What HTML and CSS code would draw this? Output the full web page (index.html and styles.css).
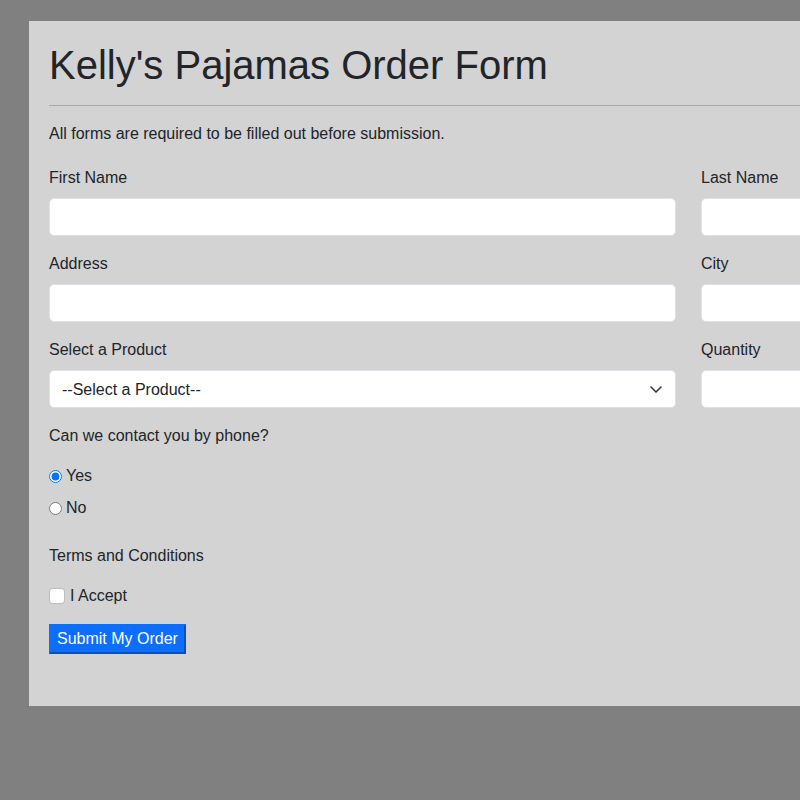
FILE: index.html
```html
<!DOCTYPE html>
<html lang="en">
<head>
<meta charset="utf-8">
<title>Kelly's Pajamas Order Form</title>
<link rel="stylesheet" href="styles.css">
</head>
<body>
<div class="card">
  <h1 class="title">Kelly's Pajamas Order Form</h1>
  <hr class="rule">
  <p class="intro">All forms are required to be filled out before submission.</p>
  <form class="order">
    <div class="grid">
      <div class="field">
        <label class="label" for="first">First Name</label>
        <input class="control" id="first" type="text">
      </div>
      <div class="field">
        <label class="label" for="last">Last Name</label>
        <input class="control" id="last" type="text">
      </div>
      <div class="field">
        <label class="label" for="address">Address</label>
        <input class="control" id="address" type="text">
      </div>
      <div class="field">
        <label class="label" for="city">City</label>
        <input class="control" id="city" type="text">
      </div>
      <div class="field">
        <label class="label" for="product">Select a Product</label>
        <div class="select-wrap">
          <select class="control select" id="product">
            <option>--Select a Product--</option>
          </select>
          <svg class="chevron" width="12" height="7" viewBox="0 0 12 7"><polyline points="1,1 6,6 11,1" fill="none" stroke="#343a40" stroke-width="1.6" stroke-linecap="round" stroke-linejoin="round"/></svg>
        </div>
      </div>
      <div class="field">
        <label class="label" for="qty">Quantity</label>
        <input class="control" id="qty" type="text">
      </div>
    </div>
    <p class="question">Can we contact you by phone?</p>
    <div class="radios">
      <label class="radio-row"><input class="radio" type="radio" name="phone" checked> Yes</label>
      <label class="radio-row"><input class="radio" type="radio" name="phone">No</label>
    </div>
    <p class="question terms">Terms and Conditions</p>
    <label class="check-row"><input class="check" type="checkbox">I Accept</label>
    <button class="submit" type="button">Submit My Order</button>
  </form>
</div>
</body>
</html>
```
FILE: styles.css
```css
html {
  overflow: hidden;
}
body {
  margin: 0;
  background: #808080;
  padding: 21px 0 0 29px;
  font-family: "Liberation Sans", Arial, sans-serif;
  font-size: 16px;
  line-height: 24px;
  color: #212529;
  min-height: 800px;
  box-sizing: border-box;
}
.card {
  width: 1000px;
  background: #d3d3d3;
  padding: 20px 20px 52px 20px;
}
.title {
  margin: 0;
  font-size: 40px;
  line-height: 48px;
  font-weight: 400;
}
.rule {
  margin: 16px 0;
  border: 0;
  border-top: 1px solid #a6a7a8;
  height: 0;
}
.intro {
  margin: 0 0 20px;
}
.order {
  margin: 0;
}
.grid {
  display: grid;
  grid-template-columns: 627px 1fr;
  column-gap: 25px;
  row-gap: 16px;
}
.field {
  display: flex;
  flex-direction: column;
}
.label {
  display: block;
  margin-bottom: 8px;
}
.control {
  box-sizing: border-box;
  height: 38px;
  width: 100%;
  border: 1px solid #dee2e6;
  border-radius: 5px;
  background: #fff;
  padding: 6px 12px;
  font-family: inherit;
  font-size: 16px;
  color: #212529;
  margin: 0;
  outline: none;
}
.select-wrap {
  position: relative;
}
.select {
  appearance: none;
  -webkit-appearance: none;
  padding-right: 36px;
}
.chevron {
  position: absolute;
  right: 14px;
  top: 16px;
  pointer-events: none;
}
.question {
  margin: 16px 0 0;
}
.radios {
  margin-top: 16px;
  display: flex;
  flex-direction: column;
  gap: 8px;
}
.radio-row {
  display: flex;
  align-items: center;
  height: 24px;
}
.radio {
  width: 13px;
  height: 13px;
  margin: 0 4px 0 0;
}
.terms {
  margin-top: 24px;
}
.check-row {
  display: flex;
  align-items: center;
  height: 24px;
  margin-top: 16px;
}
.check {
  appearance: none;
  -webkit-appearance: none;
  width: 16px;
  height: 16px;
  margin: 0 5px 0 0;
  background: #fff;
  border: 1px solid rgba(0, 0, 0, 0.25);
  border-radius: 4px;
  box-sizing: border-box;
}
.submit {
  display: block;
  margin-top: 16px;
  height: 30px;
  padding: 0 6px;
  background: #0d6efd;
  color: #fff;
  font-family: inherit;
  font-size: 16px;
  line-height: 26px;
  border: 2px solid;
  border-color: #0d6efd #0a4fb3 #0a4fb3 #0d6efd;
  border-radius: 0;
}
```
